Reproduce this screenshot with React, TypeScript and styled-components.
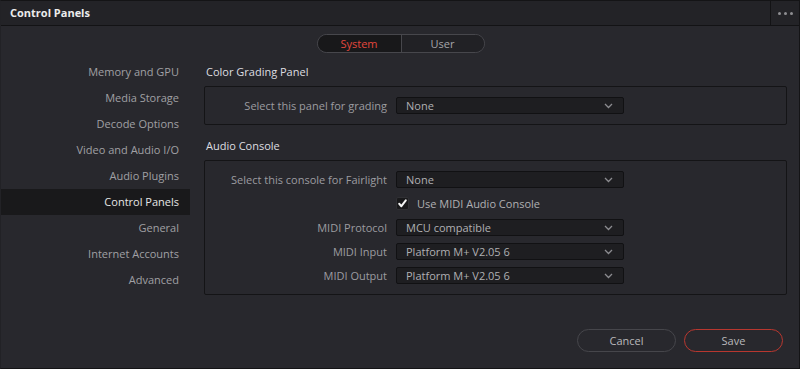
import React, { useState } from "react";
import { styled, createGlobalStyle } from "styled-components";

const GlobalStyle = createGlobalStyle`
  html, body {
    margin: 0;
    padding: 0;
    background: #28282d;
  }
  * {
    box-sizing: border-box;
  }
`;

const menuItems = [
  "Memory and GPU",
  "Media Storage",
  "Decode Options",
  "Video and Audio I/O",
  "Audio Plugins",
  "Control Panels",
  "General",
  "Internet Accounts",
  "Advanced",
];

export default function App() {
  const [tab, setTab] = useState("System");
  const [useMidi, setUseMidi] = useState(true);

  return (
    <>
      <GlobalStyle />
      <Window>
        <TitleBar>
          <Title>Control Panels</Title>
          <MoreButton>
            <Dot />
            <Dot />
            <Dot />
          </MoreButton>
        </TitleBar>
        <TabsRow>
          <Tabs>
            {["System", "User"].map((t) => (
              <Tab key={t} $active={tab === t} onClick={() => setTab(t)}>
                {t}
              </Tab>
            ))}
          </Tabs>
        </TabsRow>
        <Main>
          <Sidebar>
            {menuItems.map((item) => (
              <MenuItem key={item} $active={item === "Control Panels"}>
                {item}
              </MenuItem>
            ))}
          </Sidebar>
          <Content>
            <Heading>Color Grading Panel</Heading>
            <Group>
              <Row>
                <Label>Select this panel for grading</Label>
                <Select value="None" />
              </Row>
            </Group>
            <Heading $spaced>Audio Console</Heading>
            <Group>
              <Row>
                <Label>Select this console for Fairlight</Label>
                <Select value="None" />
              </Row>
              <Row>
                <span />
                <CheckRow onClick={() => setUseMidi(!useMidi)}>
                  <CheckBox>
                    {useMidi && (
                      <svg width="11" height="11" viewBox="0 0 11 11">
                        <path
                          d="M2.2 5.8 L4.4 8.2 L8.8 2.4"
                          fill="none"
                          stroke="#f4f4f4"
                          strokeWidth="2"
                          strokeLinecap="round"
                          strokeLinejoin="round"
                        />
                      </svg>
                    )}
                  </CheckBox>
                  <CheckText>Use MIDI Audio Console</CheckText>
                </CheckRow>
              </Row>
              <Row>
                <Label>MIDI Protocol</Label>
                <Select value="MCU compatible" />
              </Row>
              <Row>
                <Label>MIDI Input</Label>
                <Select value="Platform M+ V2.05 6" />
              </Row>
              <Row>
                <Label>MIDI Output</Label>
                <Select value="Platform M+ V2.05 6" />
              </Row>
            </Group>
            <Footer>
              <Button>Cancel</Button>
              <Button $primary>Save</Button>
            </Footer>
          </Content>
        </Main>
      </Window>
    </>
  );
}

function Select({ value }: { value: string }) {
  return (
    <SelectBox>
      <span>{value}</span>
      <svg width="9" height="6" viewBox="0 0 9 6">
        <path
          d="M1 1 L4.5 4.5 L8 1"
          fill="none"
          stroke="#8c8c90"
          strokeWidth="1.3"
        />
      </svg>
    </SelectBox>
  );
}

const Window = styled.div`
  width: 800px;
  height: 369px;
  display: flex;
  flex-direction: column;
  background: #28282d;
  border: 1px solid #141416;
  border-left-color: #222226;
  font-family: "Open Sans", "Noto Sans", sans-serif;
  font-size: 11px;
  color: #a3a3a6;
`;

const TitleBar = styled.div`
  height: 25px;
  flex-shrink: 0;
  display: flex;
  align-items: stretch;
  background: #232327;
  border-bottom: 1px solid #131315;
`;

const Title = styled.div`
  flex: 1;
  display: flex;
  align-items: center;
  padding-left: 9px;
  padding-bottom: 1px;
  font-size: 11px;
  font-weight: 700;
  color: #ececec;
`;

const MoreButton = styled.div`
  width: 29px;
  display: flex;
  align-items: center;
  justify-content: center;
  gap: 3px;
  border-left: 1px solid #131315;
  padding-top: 1px;
`;

const Dot = styled.span`
  width: 3px;
  height: 3px;
  border-radius: 50%;
  background: #8e8e92;
`;

const TabsRow = styled.div`
  display: flex;
  justify-content: center;
  padding-top: 8px;
  padding-left: 1px;
`;

const Tabs = styled.div`
  display: flex;
  height: 19px;
  border: 1px solid #47474c;
  border-radius: 10px;
  overflow: hidden;
`;

const Tab = styled.div<{ $active: boolean }>`
  width: 83px;
  display: flex;
  align-items: center;
  justify-content: center;
  padding-bottom: 1px;
  font-size: 11px;
  cursor: pointer;
  color: ${(p) => (p.$active ? "#e2473d" : "#a6a6aa")};
  background: ${(p) => (p.$active ? "#18181a" : "#212125")};
  & + & {
    border-left: 1px solid #47474c;
  }
`;

const Main = styled.div`
  flex: 1;
  display: flex;
  padding-top: 6px;
`;

const Sidebar = styled.div`
  width: 189px;
  flex-shrink: 0;
  display: flex;
  flex-direction: column;
`;

const MenuItem = styled.div<{ $active: boolean }>`
  height: 26px;
  display: flex;
  align-items: center;
  justify-content: flex-end;
  padding: 0 11px 2px 0;
  color: ${(p) => (p.$active ? "#e6e6e6" : "#a0a0a4")};
  background: ${(p) => (p.$active ? "#19191b" : "transparent")};
`;

const Content = styled.div`
  flex: 1;
  display: flex;
  flex-direction: column;
  padding: 0 12px 0 14px;
`;

const Heading = styled.div<{ $spaced?: boolean }>`
  height: 27px;
  display: flex;
  align-items: center;
  padding-left: 2px;
  margin-top: ${(p) => (p.$spaced ? "8px" : "0")};
  padding-bottom: 3px;
  color: #dedee0;
  font-size: 11px;
`;

const Group = styled.div`
  border: 1px solid #141416;
  border-radius: 2px;
  padding: 10px 0;
  display: flex;
  flex-direction: column;
  gap: 7px;
`;

const Row = styled.div`
  display: grid;
  grid-template-columns: 182px 228px;
  column-gap: 9px;
  align-items: center;
  height: 17px;
`;

const Label = styled.div`
  text-align: right;
  color: #9c9ca0;
  white-space: nowrap;
`;

const SelectBox = styled.div`
  height: 17px;
  display: flex;
  align-items: center;
  justify-content: space-between;
  padding: 0 9px;
  background: #1e1e21;
  border: 1px solid #111113;
  border-radius: 2px;
  color: #b0b0b3;
  svg {
    margin-right: 1px;
  }
`;

const CheckRow = styled.div`
  display: flex;
  align-items: center;
  gap: 8px;
  cursor: pointer;
`;

const CheckBox = styled.div`
  width: 13px;
  height: 13px;
  display: flex;
  align-items: center;
  justify-content: center;
  background: #19191b;
  border: 1px solid #303034;
  border-radius: 2px;
`;

const CheckText = styled.span`
  color: #b0b0b3;
`;

const Footer = styled.div`
  margin-top: auto;
  display: flex;
  justify-content: flex-end;
  gap: 8px;
  padding: 0 4px 16px 0;
`;

const Button = styled.button<{ $primary?: boolean }>`
  width: 99px;
  height: 23px;
  border-radius: 12px;
  background: transparent;
  border: 1px solid ${(p) => (p.$primary ? "#b8372f" : "#46464b")};
  color: #b8b8bb;
  font-family: "Open Sans", "Noto Sans", sans-serif;
  font-size: 11px;
  cursor: pointer;
`;
